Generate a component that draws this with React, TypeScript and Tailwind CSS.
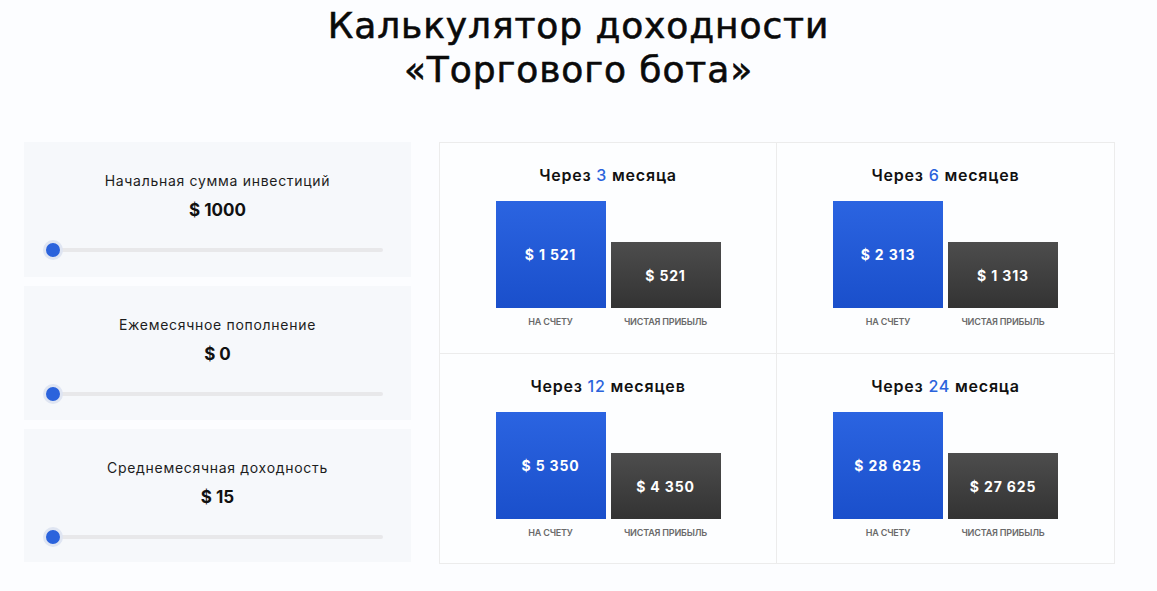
const sliders = [
  { label: "Начальная сумма инвестиций", value: "$ 1000", h: "h-[135px]" },
  { label: "Ежемесячное пополнение", value: "$ 0", h: "h-[134px]" },
  { label: "Среднемесячная доходность", value: "$ 15", h: "h-[133px]" },
];

const periods = [
  { pre: "Через", n: "3", post: "месяца", total: "$ 1 521", profit: "$ 521" },
  { pre: "Через", n: "6", post: "месяцев", total: "$ 2 313", profit: "$ 1 313" },
  { pre: "Через", n: "12", post: "месяцев", total: "$ 5 350", profit: "$ 4 350" },
  { pre: "Через", n: "24", post: "месяца", total: "$ 28 625", profit: "$ 27 625" },
];

function Slider({ label, value, h }: { label: string; value: string; h: string }) {
  return (
    <div className={`${h} bg-[#f6f8fb] flex flex-col items-center pt-[30px]`}>
      <p className="text-[14px] leading-[18px] tracking-[0.05em] text-[#1d1d1d]">{label}</p>
      <p className="mt-[9px] text-[17px] leading-[22px] font-bold text-[#111]">{value}</p>
      {/* track */}
      <div className="relative w-full mt-[27px] pl-[29px] pr-[28px]">
        <div className="h-[4px] rounded-full bg-[#e8e8ea]" />
        <span className="absolute left-[19px] top-[-8px] w-[20px] h-[20px] rounded-full bg-[#2b63dc] border-[3px] border-[#dfe5f2]" />
      </div>
    </div>
  );
}

function Period({ p }: { p: (typeof periods)[number] }) {
  return (
    <div className="h-[210px] flex flex-col items-center pt-[22px]">
      <h3 className="text-[16px] leading-[20px] font-semibold tracking-[0.05em] text-[#111]">
        {p.pre} <span className="text-[#2b63dc] font-medium">{p.n}</span> {p.post}
      </h3>
      <div className="mt-[16px] flex items-end gap-[5px]">
        <div className="flex flex-col items-center">
          <div className="w-[110px] h-[107px] bg-gradient-to-b from-[#2b64e1] to-[#1a4fcb] flex items-center justify-center text-white font-bold text-[14px] tracking-[0.06em]">
            {p.total}
          </div>
          <span className="mt-[8px] text-[9px] leading-[11px] font-semibold text-[#6a6a6a] tracking-[-0.02em]">НА СЧЕТУ</span>
        </div>
        <div className="flex flex-col items-center">
          <div className="w-[110px] h-[66px] bg-gradient-to-b from-[#4d4d4d] to-[#333] flex items-center justify-center text-white font-bold text-[14px] tracking-[0.06em]">
            {p.profit}
          </div>
          <span className="mt-[8px] text-[9px] leading-[11px] font-semibold text-[#6a6a6a] tracking-[-0.02em]">ЧИСТАЯ ПРИБЫЛЬ</span>
        </div>
      </div>
    </div>
  );
}

export default function App() {
  return (
    <div className="min-h-[591px] bg-[#fcfdff] font-['Inter',sans-serif]">
      <h1 className="pt-[4px] text-center text-[36px] leading-[44px] font-normal tracking-[0.025em] text-[#0a0a0a] [-webkit-text-stroke:0.6px_#0a0a0a] font-['DejaVu_Sans',sans-serif]">
        Калькулятор доходности
        <br />
        «Торгового бота»
      </h1>

      <div className="mt-[50px] ml-[24px] flex gap-[28px]">
        <div className="w-[387px] flex flex-col gap-[9px]">
          {sliders.map((s) => (
            <Slider key={s.label} {...s} />
          ))}
        </div>

        <div className="w-[676px] h-[422px] grid grid-cols-2 border border-[#ececec] bg-[#fdfeff]">
          {periods.map((p, i) => (
            <div
              key={p.n}
              className={`${i % 2 === 0 ? "border-r" : ""} ${i < 2 ? "border-b" : ""} border-[#ececec]`}
            >
              <Period p={p} />
            </div>
          ))}
        </div>
      </div>
    </div>
  );
}
